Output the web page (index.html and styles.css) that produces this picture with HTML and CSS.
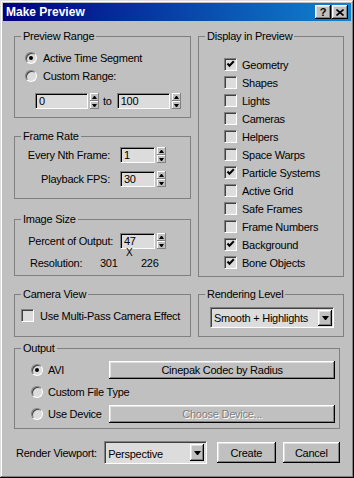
FILE: index.html
```html
<!DOCTYPE html>
<html lang="en">
<head>
    <meta charset="UTF-8">
    <meta name="viewport" content="width=device-width, initial-scale=1.0">
    <title>Make Preview</title>
    <link rel="stylesheet" href="styles.css">
</head>
<body>
    <div class="window">
        <div class="titlebar">
            <span class="title">Make Preview</span>
            <div class="title-buttons">
                <span class="tbtn">?</span>
                <span class="tbtn">
                    <svg width="8" height="7" viewBox="0 0 8 7"><path d="M0.5 0.5 L7.5 6.5 M7.5 0.5 L0.5 6.5" stroke="#000" stroke-width="1.6"/></svg>
                </span>
            </div>
        </div>

        <div class="content">
            <div class="columns">
                <div class="left">
                    <fieldset class="group range">
                        <legend>Preview Range</legend>
                        <div class="range-body">
                            <div class="opt"><span class="radio on"></span>Active Time Segment</div>
                            <div class="opt"><span class="radio"></span>Custom Range:</div>
                            <div class="range-row">
                                <span class="edit wide">0</span>
                                <span class="arrows"><span class="up"></span><span class="down"></span></span>
                                <span class="to">to</span>
                                <span class="edit wide">100</span>
                                <span class="arrows"><span class="up"></span><span class="down"></span></span>
                            </div>
                        </div>
                    </fieldset>

                    <fieldset class="group rate">
                        <legend>Frame Rate</legend>
                        <div class="rate-body">
                            <div class="field-row">
                                <span class="field-label">Every Nth Frame:</span>
                                <span class="edit narrow">1</span>
                                <span class="arrows"><span class="up"></span><span class="down"></span></span>
                            </div>
                            <div class="field-row">
                                <span class="field-label">Playback FPS:</span>
                                <span class="edit narrow">30</span>
                                <span class="arrows"><span class="up"></span><span class="down"></span></span>
                            </div>
                        </div>
                    </fieldset>

                    <fieldset class="group size">
                        <legend>Image Size</legend>
                        <div class="size-body">
                            <div class="field-row">
                                <span class="field-label percent">Percent of Output:</span>
                                <span class="edit narrow">47</span>
                                <span class="arrows"><span class="up"></span><span class="down"></span></span>
                            </div>
                            <div class="times">X</div>
                            <div class="res-row">
                                <span class="res-label">Resolution:</span>
                                <span class="res-w">301</span>
                                <span>226</span>
                            </div>
                        </div>
                    </fieldset>
                </div>

                <fieldset class="group display">
                    <legend>Display in Preview</legend>
                    <div class="checks">
                        <div class="chk-row"><span class="check on"></span>Geometry</div>
                        <div class="chk-row"><span class="check"></span>Shapes</div>
                        <div class="chk-row"><span class="check"></span>Lights</div>
                        <div class="chk-row"><span class="check"></span>Cameras</div>
                        <div class="chk-row"><span class="check"></span>Helpers</div>
                        <div class="chk-row"><span class="check"></span>Space Warps</div>
                        <div class="chk-row"><span class="check on"></span>Particle Systems</div>
                        <div class="chk-row"><span class="check"></span>Active Grid</div>
                        <div class="chk-row"><span class="check"></span>Safe Frames</div>
                        <div class="chk-row"><span class="check"></span>Frame Numbers</div>
                        <div class="chk-row"><span class="check on"></span>Background</div>
                        <div class="chk-row"><span class="check on"></span>Bone Objects</div>
                    </div>
                </fieldset>
            </div>

            <div class="columns row2">
                <fieldset class="group camera">
                    <legend>Camera View</legend>
                    <div class="camera-body">
                        <div class="chk-row"><span class="check"></span>Use Multi-Pass Camera Effect</div>
                    </div>
                </fieldset>
                <fieldset class="group level">
                    <legend>Rendering Level</legend>
                    <div class="level-body">
                        <div class="combo level-combo">
                            <span>Smooth + Highlights</span>
                            <span class="drop"></span>
                        </div>
                    </div>
                </fieldset>
            </div>

            <fieldset class="group output">
                <legend>Output</legend>
                <div class="output-body">
                    <div class="out-row">
                        <span class="out-opt"><span class="radio on"></span>AVI</span>
                        <button class="btn out-btn">Cinepak Codec by Radius</button>
                    </div>
                    <div class="out-row">
                        <span class="out-opt"><span class="radio"></span>Custom File Type</span>
                    </div>
                    <div class="out-row">
                        <span class="out-opt"><span class="radio"></span>Use Device</span>
                        <button class="btn out-btn disabled">Choose Device...</button>
                    </div>
                </div>
            </fieldset>

            <div class="bottom">
                <span class="vp-label">Render Viewport:</span>
                <div class="combo vp-combo">
                    <span>Perspective</span>
                    <span class="drop"></span>
                </div>
                <button class="btn create">Create</button>
                <button class="btn cancel">Cancel</button>
            </div>
        </div>
    </div>
</body>
</html>
```

FILE: styles.css
```css
* {
    box-sizing: border-box;
}

body {
    margin: 0;
    background-color: #c0c0c0;
    color: #000000;
    font: 11px "Liberation Sans", Arial, sans-serif;
    letter-spacing: -0.25px;
    white-space: nowrap;
}

.window {
    width: 354px;
    height: 478px;
    padding: 3px;
    background-color: #c0c0c0;
    box-shadow: inset -1px -1px #000000, inset 1px 1px #dfdfdf,
        inset -2px -2px #808080, inset 2px 2px #ffffff;
}

.titlebar {
    height: 18px;
    display: flex;
    align-items: center;
    justify-content: space-between;
    padding: 0 3px 0 3px;
    background: linear-gradient(to right, #000080, #1084d0);
}

.title {
    color: #ffffff;
    font-weight: bold;
    font-size: 12px;
    letter-spacing: 0;
}

.title-buttons {
    display: flex;
    gap: 1px;
}

.tbtn {
    width: 16px;
    height: 14px;
    display: flex;
    align-items: center;
    justify-content: center;
    background-color: #c0c0c0;
    font-weight: bold;
    font-size: 11px;
    box-shadow: inset -1px -1px #000000, inset 1px 1px #ffffff,
        inset -2px -2px #808080, inset 2px 2px #dfdfdf;
}

.content {
    padding: 9px 11px 0 11px;
}

.columns {
    display: grid;
    grid-template-columns: 177px 146px;
    column-gap: 7px;
}

.left {
    display: flex;
    flex-direction: column;
}

/* group boxes */
.group {
    margin: 0;
    padding: 0;
    min-width: 0;
    border: 1px solid #808080;
}

.group legend {
    margin-left: 6px;
    padding: 0 2px;
    line-height: 13px;
}

.range {
    height: 88px;
}

.range-body {
    padding: 8px 0 0 10px;
}

.rate {
    height: 69px;
    margin-top: 12px;
}

.rate-body {
    padding-top: 4px;
}

.size {
    height: 63px;
    margin-top: 14px;
}

.size-body {
    padding-top: 7px;
}

.display {
    height: 247px;
}

.checks {
    padding: 15px 0 0 25px;
}

.row2 {
    margin-top: 11px;
}

.camera,
.level {
    height: 49px;
}

.camera-body {
    padding: 8px 0 0 6px;
}

.level-body {
    padding: 6px 0 0 11px;
}

.output {
    height: 87px;
    margin-top: 5px;
}

.output-body {
    padding: 6px 4px 0 16px;
}

/* radios and checkboxes */
.opt {
    display: flex;
    align-items: center;
    gap: 6px;
    height: 14px;
    margin-bottom: 4px;
}

.radio {
    width: 12px;
    height: 12px;
    flex: none;
    border-radius: 50%;
    display: flex;
    align-items: center;
    justify-content: center;
    background-color: #dcdcdc;
    border: 1px solid;
    border-color: #808080 #ffffff #ffffff #808080;
    box-shadow: inset 1px 1px #404040;
}

.radio.on::after {
    content: "";
    width: 4px;
    height: 4px;
    border-radius: 50%;
    background-color: #000000;
}

.checks {
    display: flex;
    flex-direction: column;
    gap: 5px;
}

.chk-row {
    display: flex;
    align-items: center;
    gap: 5px;
    height: 13px;
}

.camera .chk-row {
    gap: 6px;
}

.check {
    width: 13px;
    height: 13px;
    flex: none;
    background-color: #dcdcdc;
    border: 1px solid;
    border-color: #808080 #ffffff #ffffff #808080;
    box-shadow: inset 1px 1px #404040, inset -1px -1px #dfdfdf;
}

.check.on {
    background-image: url("data:image/svg+xml,%3Csvg xmlns='http://www.w3.org/2000/svg' width='11' height='11'%3E%3Cpath d='M2.5 4.5 L4.5 6.8 L8.8 2.2' fill='none' stroke='%23000' stroke-width='2'/%3E%3C/svg%3E");
    background-repeat: no-repeat;
}

/* spinners */
.range-row {
    display: flex;
    align-items: center;
    margin-top: 10px;
    margin-left: 10px;
}

.edit {
    height: 16px;
    padding-left: 3px;
    line-height: 14px;
    background-color: #dcdcdc;
    border: 1px solid;
    border-color: #808080 #ffffff #ffffff #808080;
    box-shadow: inset 1px 1px #000000;
}

.edit.wide {
    width: 53px;
}

.edit.narrow {
    width: 35px;
}

.arrows {
    width: 9px;
    height: 16px;
    margin-left: 2px;
    display: flex;
    flex-direction: column;
}

.arrows span {
    flex: 1;
    display: flex;
    align-items: center;
    justify-content: center;
    background-color: #c0c0c0;
    box-shadow: inset -1px -1px #808080, inset 1px 1px #ffffff;
}

.arrows .up::after,
.arrows .down::after {
    content: "";
    width: 1px;
    height: 0;
    border-left: 2px solid transparent;
    border-right: 2px solid transparent;
}

.arrows .up::after {
    border-bottom: 3px solid #000000;
}

.arrows .down::after {
    border-top: 3px solid #000000;
}

.to {
    margin: 0 5px 0 4px;
}

.field-row {
    display: flex;
    align-items: center;
    height: 16px;
    margin-bottom: 8px;
}

.field-label {
    width: 95px;
    margin-right: 10px;
    text-align: right;
}

.field-label.percent {
    width: 98px;
    margin-right: 7px;
}

.size .field-row {
    margin-bottom: 0;
}

.times {
    margin: -1px 0 0 111px;
    height: 9px;
    line-height: 9px;
    font-size: 10px;
}

.res-row {
    display: flex;
    height: 12px;
    line-height: 12px;
    margin-left: 15px;
}

.res-label {
    width: 70px;
}

.res-w {
    width: 41px;
}

/* combos and buttons */
.combo {
    display: flex;
    align-items: center;
    justify-content: space-between;
    padding: 0 1px 0 3px;
    background-color: #dcdcdc;
    border: 1px solid;
    border-color: #808080 #ffffff #ffffff #808080;
    box-shadow: inset 1px 1px #404040, inset -1px -1px #dfdfdf;
}

.level-combo {
    width: 124px;
    height: 21px;
}

.drop {
    width: 14px;
    height: 16px;
    display: flex;
    align-items: center;
    justify-content: center;
    background-color: #c0c0c0;
    box-shadow: inset -1px -1px #000000, inset 1px 1px #ffffff,
        inset -2px -2px #808080, inset 2px 2px #dfdfdf;
}

.drop::after {
    content: "";
    width: 1px;
    height: 0;
    border-left: 3px solid transparent;
    border-right: 3px solid transparent;
    border-top: 4px solid #000000;
}

.btn {
    margin: 0;
    padding: 0;
    border: none;
    background-color: #c0c0c0;
    color: #000000;
    font: 11px "Liberation Sans", Arial, sans-serif;
    letter-spacing: -0.25px;
    box-shadow: inset -1px -1px #000000, inset 1px 1px #ffffff,
        inset -2px -2px #808080, inset 2px 2px #dfdfdf;
}

.btn.disabled {
    color: #808080;
    text-shadow: 1px 1px #ffffff;
}

.out-row {
    display: flex;
    align-items: center;
    height: 18px;
    margin-bottom: 4px;
}

.out-opt {
    width: 79px;
    display: flex;
    align-items: center;
    gap: 5px;
}

.out-btn {
    width: 228px;
    height: 18px;
}

.bottom {
    display: flex;
    align-items: center;
    height: 23px;
    margin-top: 12px;
}

.vp-label {
    width: 89px;
    margin-left: 2px;
}

.vp-combo {
    width: 104px;
    height: 23px;
    padding-right: 2px;
}

.vp-combo span:first-child {
    margin-top: 3px;
}

.vp-combo .drop {
    height: 17px;
}

.create {
    width: 59px;
    height: 21px;
    margin-left: 10px;
}

.cancel {
    width: 58px;
    height: 21px;
    margin-left: 7px;
}
```
